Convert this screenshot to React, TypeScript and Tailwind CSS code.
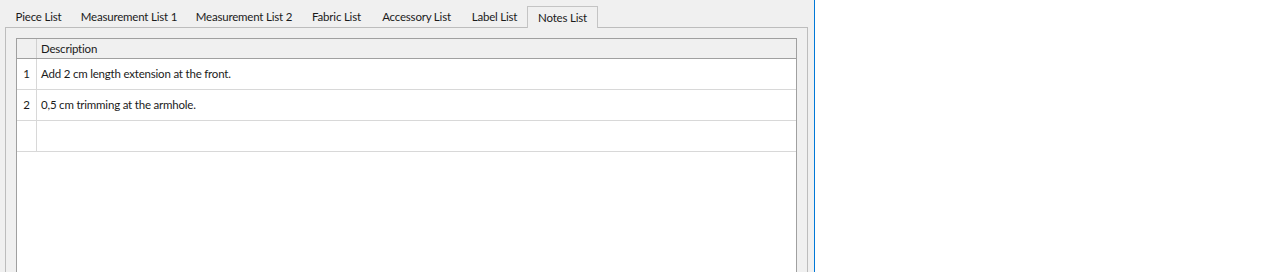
import React from "react";

const tabs = [
  { label: "Piece List", w: "w-[67px]" },
  { label: "Measurement List 1", w: "w-[114px]" },
  { label: "Measurement List 2", w: "w-[116px]" },
  { label: "Fabric List", w: "w-[69px]" },
  { label: "Accessory List", w: "w-[91px]" },
  { label: "Label List", w: "w-[65px]" },
];

const notes = [
  "Add 2 cm length extension at the front.",
  "0,5 cm trimming at the armhole.",
  "",
];

const App = () => {
  return (
    <div className="flex h-[272px] w-[1270px] items-start overflow-hidden bg-white font-['Lato',sans-serif] text-[11.5px] tracking-[-0.2px] text-[#1b1b1b]">
      <div className="flex h-[300px] w-[814px] flex-col bg-[#f0f0f0] pl-[5px] pr-[6px] pt-[6px]">
        <div className="flex h-[21px] items-start">
          {tabs.map((t) => (
            <div
              key={t.label}
              className={`${t.w} flex h-[21px] items-center justify-center pt-[1px] leading-none`}
            >
              {t.label}
            </div>
          ))}
          <div className="relative z-10 flex h-[22px] w-[71px] items-center justify-center border-x border-t border-[#c4c4c4] bg-[#f0f0f0] leading-none">
            Notes List
          </div>
        </div>
        <div className="flex flex-1 flex-col border border-[#bdbdbd] px-[10px] pt-[10px]">
          <div className="flex flex-1 flex-col border-x border-t border-[#a0a0a0] bg-white">
            <div className="flex h-[20px] border-b border-[#a0a0a0] bg-[#f0f0f0]">
              <div className="w-[20px] border-r border-[#d0d0d0]" />
              <div className="flex items-center pl-[4px]">Description</div>
            </div>
            {notes.map((n, i) => (
              <div key={i} className="flex h-[31px] border-b border-[#d8d8d8]">
                <div className="flex w-[20px] items-center justify-center border-r border-[#d8d8d8]">
                  {n ? i + 1 : ""}
                </div>
                <div className="flex items-center pl-[4px]">{n}</div>
              </div>
            ))}
          </div>
        </div>
      </div>
      <div className="h-full w-px bg-[#0078d7]" />
      <div className="h-full flex-1 bg-white" />
    </div>
  );
};

export default App;
